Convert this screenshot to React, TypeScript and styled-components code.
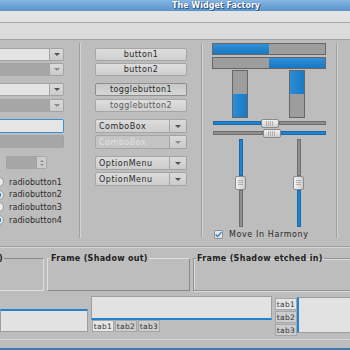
import styled, { createGlobalStyle } from 'styled-components';

const GlobalStyle = createGlobalStyle`
  html, body {
    margin: 0;
    padding: 0;
    background: #bdbdbd;
  }
  * {
    box-sizing: border-box;
  }
`;

const BLUE = '#2184d2';

const Window = styled.div`
  width: 350px;
  height: 350px;
  overflow: hidden;
  display: flex;
  flex-direction: column;
  background: #bdbdbd;
  color: #2a2a2a;
  font-family: 'DejaVu Sans', sans-serif;
  font-size: 8px;
`;

const TitleBar = styled.div`
  flex: none;
  height: 11px;
  padding-left: 172px;
  background: linear-gradient(#86b7e3, #5a93cb);
  color: #ffffff;
  font-size: 8px;
  font-weight: bold;
  line-height: 11px;
  white-space: nowrap;
  text-shadow: 0 0 1px #1d3f66, 1px 1px 0 #2c5685;
`;

const MenuBar = styled.div`
  flex: none;
  height: 12px;
  background: #e3e3e3;
  border-bottom: 1px solid #a8a8a8;
`;

const ToolBar = styled.div`
  flex: none;
  height: 17px;
  background: #dbdbdb;
  border-bottom: 1px solid #a2a2a2;
`;

const Main = styled.div`
  flex: none;
  display: flex;
  height: 206px;
  padding-top: 3px;
`;

const Column = styled.div<{ $width: number; $offset: number; $top?: number }>`
  flex: none;
  display: flex;
  flex-direction: column;
  width: ${(p) => p.$width}px;
  margin-left: ${(p) => p.$offset}px;
  padding-top: ${(p) => p.$top ?? 0}px;
`;

const VSeparator = styled.div<{ $offset: number }>`
  flex: none;
  width: 2px;
  height: 195px;
  margin-left: ${(p) => p.$offset}px;
  border-left: 1px solid #9f9f9f;
  border-right: 1px solid #d4d4d4;
`;

const HSeparator = styled.div`
  flex: none;
  height: 2px;
  border-top: 1px solid #9f9f9f;
  border-bottom: 1px solid #d4d4d4;
`;

/* combo with entry */
const Combo = styled.div<{ $gap?: number }>`
  display: flex;
  height: 13px;
  margin-top: ${(p) => p.$gap ?? 0}px;
`;

const ComboEntry = styled.div<{ $disabled?: boolean }>`
  flex: 1;
  background: ${(p) => (p.$disabled ? '#a6a6a6' : '#e4e4e4')};
  border: 1px solid #a3a3a3;
  border-radius: 2px 0 0 2px;
`;

const ArrowButton = styled.div<{ $disabled?: boolean }>`
  flex: none;
  width: 14px;
  display: flex;
  align-items: center;
  justify-content: center;
  background: linear-gradient(#dadada, #cbcbcb);
  border: 1px solid #a3a3a3;
  border-left: none;
  border-radius: 0 2px 2px 0;

  &::after {
    content: '';
    border-left: 3px solid transparent;
    border-right: 3px solid transparent;
    border-top: 3px solid ${(p) => (p.$disabled ? '#8a8a8a' : '#505050')};
  }
`;

const Entry = styled.div<{ $gap?: number; $focused?: boolean; $disabled?: boolean }>`
  height: ${(p) => (p.$focused ? 14 : 13)}px;
  margin-top: ${(p) => p.$gap ?? 0}px;
  background: ${(p) => (p.$disabled ? '#a6a6a6' : '#e6e6e6')};
  border: 1px solid ${(p) => (p.$focused ? '#3d8fd4' : '#a3a3a3')};
  border-radius: 2px;
`;

const Spin = styled.div`
  display: flex;
  width: 41px;
  height: 13px;
  margin: 8px 0 0 26px;
`;

const SpinEntry = styled.div`
  flex: 1;
  background: #a6a6a6;
  border: 1px solid #a3a3a3;
  border-radius: 2px 0 0 2px;
`;

const SpinButtons = styled.div`
  flex: none;
  width: 10px;
  display: flex;
  flex-direction: column;
  align-items: center;
  justify-content: center;
  gap: 2px;
  background: #cdcdcd;
  border: 1px solid #a8a8a8;
  border-left: none;
  border-radius: 0 2px 2px 0;
`;

const SpinArrow = styled.span<{ $up?: boolean }>`
  border-left: 2px solid transparent;
  border-right: 2px solid transparent;
  ${(p) => (p.$up ? 'border-bottom' : 'border-top')}: 2px solid #8c8c8c;
`;

const RadioList = styled.div`
  display: flex;
  flex-direction: column;
  margin: 7px 0 0 14px;
`;

const Radio = styled.div<{ $checked?: boolean }>`
  display: flex;
  align-items: center;
  gap: 5px;
  height: 12.6px;
  letter-spacing: 0.1px;
  white-space: nowrap;

  &::before {
    content: '';
    flex: none;
    width: 8px;
    height: 8px;
    border-radius: 50%;
    border: 1px solid #9a9a9a;
    background: ${(p) =>
      p.$checked
        ? `radial-gradient(circle, ${BLUE} 0 2px, #e8e8e8 2.5px)`
        : '#e8e8e8'};
  }
`;

/* buttons */
const Button = styled.div<{ $gap?: number; $pressed?: boolean; $disabled?: boolean }>`
  height: 13px;
  margin-top: ${(p) => p.$gap ?? 0}px;
  display: flex;
  align-items: center;
  justify-content: center;
  background: ${(p) =>
    p.$pressed ? 'linear-gradient(#c8c8c8, #d6d6d6)' : 'linear-gradient(#dedede, #cecece)'};
  border: 1px solid ${(p) => (p.$pressed ? '#8e8e8e' : '#a6a6a6')};
  border-radius: 2px;
  color: ${(p) => (p.$disabled ? '#5c5c5c' : '#2a2a2a')};
  letter-spacing: 0.4px;
  white-space: nowrap;
`;

const ComboBox = styled.div<{ $gap?: number; $disabled?: boolean }>`
  display: flex;
  height: 14px;
  margin-top: ${(p) => p.$gap ?? 0}px;
  color: ${(p) => (p.$disabled ? '#e2e2e2' : '#2a2a2a')};
`;

const ComboLabel = styled.div<{ $disabled?: boolean }>`
  flex: 1;
  display: flex;
  align-items: center;
  padding-left: 3px;
  background: ${(p) => (p.$disabled ? '#c4c4c4' : 'linear-gradient(#dcdcdc, #cdcdcd)')};
  border: 1px solid #a6a6a6;
  border-radius: 2px 0 0 2px;
  letter-spacing: 0.5px;
  white-space: nowrap;
`;

const ComboArrow = styled(ArrowButton)`
  width: 17px;
`;

/* progress bars */
const HBar = styled.div<{ $gap?: number; $reverse?: boolean }>`
  display: flex;
  flex-direction: ${(p) => (p.$reverse ? 'row-reverse' : 'row')};
  height: 12px;
  margin-top: ${(p) => p.$gap ?? 0}px;
  background: #9d9d9d;
  border: 1px solid #666666;
`;

const Fill = styled.div<{ $vertical?: boolean }>`
  background: ${(p) =>
    p.$vertical
      ? `linear-gradient(90deg, #2c8dd8, #1a78c4)`
      : `linear-gradient(#2f8fd9, #1a77c2)`};
`;

const VBars = styled.div`
  display: flex;
  gap: 41px;
  height: 48px;
  margin-top: 1px;
  padding-left: 20px;
`;

const VBar = styled.div<{ $reverse?: boolean }>`
  display: flex;
  flex-direction: ${(p) => (p.$reverse ? 'column' : 'column-reverse')};
  width: 16px;
  background: #9d9d9d;
  border: 1px solid #666666;
`;

/* scales */
const HScale = styled.div<{ $reverse?: boolean }>`
  display: flex;
  flex-direction: ${(p) => (p.$reverse ? 'row-reverse' : 'row')};
  align-items: center;
  height: 10px;
  margin-left: 1px;
  width: 113px;
`;

const Track = styled.div<{ $blue?: boolean; $vertical?: boolean }>`
  flex: 1;
  ${(p) => (p.$vertical ? 'width: 4px;' : 'height: 4px;')}
  background: ${(p) => (p.$blue ? BLUE : '#8f8f8f')};
  border: 1px solid ${(p) => (p.$blue ? '#1a69a8' : '#6e6e6e')};
`;

const Handle = styled.div<{ $vertical?: boolean }>`
  flex: none;
  width: ${(p) => (p.$vertical ? 11 : 18)}px;
  height: ${(p) => (p.$vertical ? 14 : 9)}px;
  border: 1px solid #8a8a8a;
  border-radius: 2px;
  background: ${(p) =>
    p.$vertical
      ? 'repeating-linear-gradient(#b0b0b0 0 1px, transparent 1px 2px) center / 5px 6px no-repeat, linear-gradient(90deg, #f2f2f2, #cdcdcd)'
      : 'repeating-linear-gradient(90deg, #b0b0b0 0 1px, transparent 1px 2px) center / 8px 5px no-repeat, linear-gradient(#f2f2f2, #cdcdcd)'};
`;

const VScales = styled.div`
  display: flex;
  height: 88px;
  margin-top: 1px;
  padding-left: 23px;
  gap: 47px;
`;

const VScale = styled.div<{ $reverse?: boolean }>`
  display: flex;
  flex-direction: ${(p) => (p.$reverse ? 'column-reverse' : 'column')};
  align-items: center;
  width: 11px;
`;

const CheckRow = styled.label`
  display: flex;
  align-items: center;
  gap: 6px;
  height: 10px;
  margin: 2px 0 0 2px;
  font-size: 8px;
  letter-spacing: 0.6px;
  white-space: nowrap;
`;

const CheckBox = styled.span`
  width: 9px;
  height: 9px;
  display: flex;
  align-items: center;
  justify-content: center;
  background: #e6e6e6;
  border: 1px solid #8f8f8f;
  border-radius: 1px;
`;

/* frames */
const FrameRow = styled.div`
  flex: none;
  display: flex;
  gap: 3px;
  margin: 6px 0 0 -91px;
`;

const Frame = styled.fieldset<{ $width: number; $kind: 'in' | 'out' | 'etched' }>`
  flex: none;
  width: ${(p) => p.$width}px;
  height: 37px;
  margin: 0;
  padding: 0;
  border: 1px solid;
  border-color: ${(p) =>
    p.$kind === 'out'
      ? '#dedede #8a8a8a #8a8a8a #dedede'
      : p.$kind === 'in'
      ? '#8a8a8a #dedede #dedede #8a8a8a'
      : '#939393'};
  box-shadow: ${(p) => (p.$kind === 'etched' ? 'inset 1px 1px 0 #dadada, 1px 1px 0 #dadada' : 'none')};

  legend {
    margin-left: 2px;
    padding: 0 1px;
    font-size: 8px;
    font-weight: bold;
    letter-spacing: 0.3px;
    color: #1e1e1e;
    white-space: nowrap;
  }
`;

/* notebooks */
const NotebookRow = styled.div`
  flex: none;
  display: flex;
  align-items: flex-start;
  margin-top: 5px;
`;

const Notebook = styled.div<{ $width: number; $offset?: number; $dir: 'top' | 'bottom' | 'left' }>`
  flex: none;
  display: flex;
  flex-direction: ${(p) => (p.$dir === 'top' ? 'column' : p.$dir === 'bottom' ? 'column-reverse' : 'row')};
  width: ${(p) => p.$width}px;
  margin-left: ${(p) => p.$offset ?? 0}px;
`;

const Tabs = styled.div<{ $vertical?: boolean }>`
  flex: none;
  display: flex;
  flex-direction: ${(p) => (p.$vertical ? 'column' : 'row')};
  gap: 1px;
  min-height: 12px;
  padding-left: ${(p) => (p.$vertical ? 0 : 1)}px;
  padding-top: ${(p) => (p.$vertical ? 1 : 0)}px;
`;

const Tab = styled.div<{ $active?: boolean }>`
  width: 22px;
  height: 12px;
  display: flex;
  align-items: center;
  justify-content: center;
  background: ${(p) => (p.$active ? '#e6e6e6' : '#cdcdcd')};
  border: 1px solid #a6a6a6;
  font-size: 7.5px;
  letter-spacing: 0.3px;
  color: #333333;
`;

const Page = styled.div<{ $height: number; $edge: 'top' | 'bottom' | 'left' }>`
  flex: 1 0 auto;
  height: ${(p) => p.$height}px;
  background: #e2e2e2;
  border: 1px solid #9e9e9e;
  border-${(p) => p.$edge}: 2px solid ${BLUE};
`;

const StatusLine = styled.div`
  flex: none;
  height: 11px;
  margin-top: auto;
  border-top: 1px solid #d6d6d6;
  border-bottom: 2px solid #3b78b4;
`;

const ComboWithEntry = ({ gap, disabled }: { gap?: number; disabled?: boolean }) => (
  <Combo $gap={gap}>
    <ComboEntry $disabled={disabled} />
    <ArrowButton $disabled={disabled} />
  </Combo>
);

const TabSet = () => (
  <>
    <Tab $active>tab1</Tab>
    <Tab>tab2</Tab>
    <Tab>tab3</Tab>
  </>
);

const App = () => {
  return (
    <>
      <GlobalStyle />
      <Window>
        <TitleBar>The Widget Factory</TitleBar>
        <MenuBar />
        <ToolBar />

        <Main>
          <Column $width={84} $offset={-20} $top={5}>
            <ComboWithEntry />
            <ComboWithEntry gap={2} disabled />
            <ComboWithEntry gap={7} />
            <ComboWithEntry gap={3} disabled />
            <Entry $gap={7} $focused />
            <Entry $gap={2} $disabled />
            <Spin>
              <SpinEntry />
              <SpinButtons>
                <SpinArrow $up />
                <SpinArrow />
              </SpinButtons>
            </Spin>
            <RadioList>
              <Radio>radiobutton1</Radio>
              <Radio $checked>radiobutton2</Radio>
              <Radio>radiobutton3</Radio>
              <Radio $checked>radiobutton4</Radio>
            </RadioList>
          </Column>

          <VSeparator $offset={15} />

          <Column $width={92} $offset={14} $top={5}>
            <Button>button1</Button>
            <Button $gap={2}>button2</Button>
            <Button $gap={7} $pressed>togglebutton1</Button>
            <Button $gap={3} $disabled>togglebutton2</Button>
            <ComboBox $gap={7}>
              <ComboLabel>ComboBox</ComboLabel>
              <ComboArrow />
            </ComboBox>
            <ComboBox $gap={2} $disabled>
              <ComboLabel $disabled>ComboBox</ComboLabel>
              <ComboArrow $disabled />
            </ComboBox>
            <ComboBox $gap={7}>
              <ComboLabel>OptionMenu</ComboLabel>
              <ComboArrow />
            </ComboBox>
            <ComboBox $gap={2}>
              <ComboLabel>OptionMenu</ComboLabel>
              <ComboArrow />
            </ComboBox>
          </Column>

          <VSeparator $offset={14} />

          <Column $width={114} $offset={9}>
            <HBar>
              <Fill style={{ width: '50%' }} />
            </HBar>
            <HBar $gap={2} $reverse>
              <Fill style={{ width: '50%' }} />
            </HBar>
            <VBars>
              <VBar>
                <Fill $vertical style={{ height: '50%' }} />
              </VBar>
              <VBar $reverse>
                <Fill $vertical style={{ height: '50%' }} />
              </VBar>
            </VBars>
            <HScale>
              <Track $blue />
              <Handle />
              <Track />
            </HScale>
            <HScale $reverse>
              <Track $blue style={{ flex: '0 0 45px' }} />
              <Handle />
              <Track />
            </HScale>
            <VScales>
              <VScale>
                <Track $vertical $blue />
                <Handle $vertical />
                <Track $vertical />
              </VScale>
              <VScale $reverse>
                <Track $vertical $blue />
                <Handle $vertical />
                <Track $vertical />
              </VScale>
            </VScales>
            <CheckRow>
              <CheckBox>
                <svg width="8" height="7" viewBox="0 0 8 7">
                  <path d="M0.8 3.6 L3 5.8 L7.4 0.8" fill="none" stroke={BLUE} strokeWidth="1.5" />
                </svg>
              </CheckBox>
              Move In Harmony
            </CheckRow>
          </Column>

          <VSeparator $offset={10} />
        </Main>

        <HSeparator />

        <FrameRow>
          <Frame $width={135} $kind="in">
            <legend>Frame (Shadow in)</legend>
          </Frame>
          <Frame $width={143} $kind="out">
            <legend>Frame (Shadow out)</legend>
          </Frame>
          <Frame $width={170} $kind="etched">
            <legend>Frame (Shadow etched in)</legend>
          </Frame>
        </FrameRow>

        <NotebookRow>
          {/* first notebook: its tabs lie left of the visible area */}
          <Notebook $width={88} $dir="top" style={{ marginTop: 1 }}>
            <Tabs />
            <Page $height={23} $edge="top" />
          </Notebook>
          <Notebook $width={181} $offset={3} $dir="bottom">
            <Tabs>
              <TabSet />
            </Tabs>
            <Page $height={24} $edge="bottom" />
          </Notebook>
          <Notebook $width={90} $offset={3} $dir="left" style={{ marginTop: 1 }}>
            <Tabs $vertical>
              <TabSet />
            </Tabs>
            <Page $height={36} $edge="left" />
          </Notebook>
        </NotebookRow>

        <StatusLine />
      </Window>
    </>
  );
};

export default App;
